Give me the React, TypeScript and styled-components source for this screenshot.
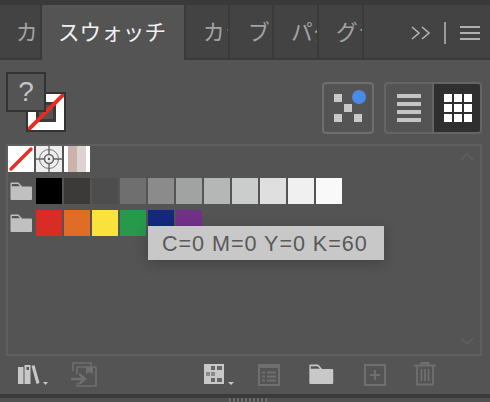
import React from "react";
import styled, { createGlobalStyle } from "styled-components";

const Global = createGlobalStyle`
  html, body { margin: 0; padding: 0; background: #545454; }
  * { box-sizing: border-box; }
`;

const Panel = styled.div`
  width: 490px;
  height: 402px;
  background: #545454;
  display: flex;
  flex-direction: column;
  overflow: hidden;
  font-family: "Noto Sans CJK JP", "Liberation Sans", sans-serif;
`;

const TopStrip = styled.div`
  height: 5px;
  flex: none;
  background: #3a3a3a;
`;

const TabBar = styled.div`
  height: 55px;
  flex: none;
  display: flex;
  background: #434343;
  border-bottom: 2px solid #3a3a3a;
`;

const Tab = styled.div<{ $w: number; $active?: boolean; $pad: number; $first?: boolean }>`
  width: ${(p) => p.$w}px;
  flex: none;
  height: ${(p) => (p.$active ? 55 : 53)}px;
  overflow: hidden;
  white-space: nowrap;
  padding-left: ${(p) => p.$pad}px;
  padding-top: 10px;
  line-height: 32px;
  font-size: 21.6px;
  color: ${(p) => (p.$active ? "#f0f0f0" : "#a4a4a4")};
  background: ${(p) => (p.$active ? "#545454" : "#434343")};
  border-right: ${(p) => (p.$active ? "none" : "2px solid #3a3a3a")};
  ${(p) => (p.$first ? "border-left: 2px solid #3a3a3a;" : "")}
`;

const TabRest = styled.div`
  flex: 1;
  display: flex;
  height: 53px;
  padding: 16px 0 0 47px;
`;

const Head = styled.div`
  height: 84px;
  flex: none;
  display: flex;
  padding: 0 8px 0 6px;
`;

const FillStroke = styled.div`
  position: relative;
  width: 60px;
  height: 60px;
  margin-top: 12px;
`;

const StrokeBox = styled.div`
  position: absolute;
  left: 20px;
  top: 20px;
  width: 40px;
  height: 40px;
  border: 2px solid #333;
  background: #fff;
`;

const StrokeInner = styled.div`
  position: absolute;
  left: 8px;
  top: 8px;
  width: 20px;
  height: 20px;
  background: #545454;
  border: 3px solid #3a3a3a;
`;

const StrokeSlash = styled.svg`
  position: absolute;
  left: 0;
  top: 0;
`;

const FillBox = styled.div`
  position: absolute;
  left: 0;
  top: 0;
  width: 40px;
  height: 40px;
  border: 2px solid #333;
  background: #545454;
  color: #c4c4c4;
  font: 28px/36px "Liberation Sans", sans-serif;
  text-align: center;
`;

const SpreadButton = styled.div`
  width: 52px;
  height: 52px;
  margin: 22px 0 0 256px;
  border: 2px solid #6e6e6e;
  border-radius: 4px;
`;

const Segmented = styled.div`
  width: 98px;
  height: 52px;
  margin: 22px 0 0 10px;
  display: flex;
  border: 2px solid #656565;
  border-radius: 4px;
  overflow: hidden;
`;

const Segment = styled.div<{ $on?: boolean }>`
  width: ${(p) => (p.$on ? 48 : 46)}px;
  display: flex;
  align-items: center;
  justify-content: center;
  padding-left: ${(p) => (p.$on ? 2 : 0)}px;
  background: ${(p) => (p.$on ? "#2f2f2f" : "transparent")};
  border-left: ${(p) => (p.$on ? "2px solid #656565" : "none")};
`;

const SwatchFrame = styled.div`
  position: relative;
  height: 212px;
  flex: none;
  margin: 0 8px 0 6px;
  border: 2px solid #5f5f5f;
  display: flex;
  flex-direction: column;
  gap: 6px;
`;

const Row = styled.div`
  display: flex;
  gap: 2px;
  height: 26px;
`;

const FolderSlot = styled.div`
  width: 26px;
  display: flex;
  align-items: center;
  padding-left: 2px;
`;

const Swatch = styled.div<{ $c: string }>`
  width: 26px;
  height: 26px;
  background: ${(p) => p.$c};
`;

const SpecialSwatch = styled.div`
  width: 26px;
  height: 26px;
  background: #fff;
  overflow: hidden;
`;

const Chevron = styled.svg<{ $bottom?: boolean }>`
  position: absolute;
  right: 6px;
  ${(p) => (p.$bottom ? "bottom: 9px;" : "top: 7px;")}
`;

const Tooltip = styled.div`
  position: absolute;
  left: 140px;
  top: 80px;
  width: 236px;
  height: 34px;
  background: #c8c8c8;
  color: #595959;
  font: 21.6px/36px "Liberation Sans", sans-serif;
  letter-spacing: 0.95px;
  padding-left: 14px;
  white-space: nowrap;
  box-shadow: 0 3px 14px rgba(0, 0, 0, 0.22);
`;

const Toolbar = styled.div`
  height: 38px;
  flex: none;
  display: flex;
  align-items: flex-start;
  padding: 6px 0 0 0;
`;

const Tool = styled.svg<{ $ml: number; $mt?: number }>`
  flex: none;
  margin-left: ${(p) => p.$ml}px;
  margin-top: ${(p) => p.$mt ?? 0}px;
  display: block;
`;

const BottomEdge = styled.div`
  height: 4px;
  flex: none;
  background: #3a3a3a;
`;

const BottomFoot = styled.div`
  height: 4px;
  flex: none;
  display: flex;
  justify-content: center;
  background: #505050;
`;

const Grip = styled.div`
  width: 38px;
  height: 4px;
  margin-left: 6px;
  background: repeating-linear-gradient(90deg, #6a6a6a 0 2px, #464646 2px 4px);
`;

const grays = ["#000000", "#3b3a38", "#4e4d4d", "#6f6f6f", "#8b8b8b", "#a1a3a2", "#b5b7b6", "#cbcdcc", "#dedfde", "#eff0ef", "#f8f9f8"];
const colors = ["#d82c25", "#e06c27", "#fbe13b", "#27994b", "#13287f", "#73308a"];

const Folder = ({ c = "#c0c0c0", w = 22, h = 18 }: { c?: string; w?: number; h?: number }) => (
  <svg width={w} height={h} viewBox="0 0 22 18" style={{ display: "block" }}>
    <path d="M0.5 1.5Q0.5 0.5 1.5 0.5H8.5L12 4.5H21Q22 4.5 22 5.5V17Q22 18 21 18H1.5Q0.5 18 0.5 17Z" fill={c} />
    <path d="M1.8 2H8L10 4.2H1.8Z" fill="#545454" />
  </svg>
);

export default function App() {
  return (
    <Panel>
      <Global />
      <TopStrip />
      <TabBar>
        <Tab $w={42} $pad={16}>カラー</Tab>
        <Tab $w={142} $active $pad={16}>スウォッチ</Tab>
        <Tab $w={46} $pad={17} $first>カラー</Tab>
        <Tab $w={44} $pad={18}>ブラシ</Tab>
        <Tab $w={45} $pad={17}>パターン</Tab>
        <Tab $w={45} $pad={17}>グラフ</Tab>
        <TabRest>
          <svg width="70" height="24" viewBox="0 0 70 24">
            <path d="M1 6L8 12L1 18M11 6L18 12L11 18" fill="none" stroke="#b4b4b4" strokeWidth="1.6" />
            <rect x="33" y="1" width="2" height="22" fill="#9a9a9a" />
            <path d="M49 6H69M49 12H69M49 18H69" stroke="#b0b0b0" strokeWidth="2" />
          </svg>
        </TabRest>
      </TabBar>

      <Head>
        <FillStroke>
          <StrokeBox>
            <StrokeInner />
            <StrokeSlash width="36" height="36" viewBox="0 0 36 36">
              <path d="M0 36L36 0" stroke="#ea2c20" strokeWidth="4" />
            </StrokeSlash>
          </StrokeBox>
          <FillBox>?</FillBox>
        </FillStroke>
        <SpreadButton>
          <svg width="48" height="48" viewBox="0 0 48 48">
            <rect x="10" y="10" width="8" height="8" fill="#c8c8c8" />
            <rect x="20" y="20" width="8" height="8" fill="#c8c8c8" />
            <rect x="10" y="30" width="8" height="8" fill="#c8c8c8" />
            <rect x="30" y="30" width="8" height="8" fill="#c8c8c8" />
            <circle cx="35" cy="13" r="7" fill="#4a8be8" />
          </svg>
        </SpreadButton>
        <Segmented>
          <Segment>
            <svg width="24" height="28" viewBox="0 0 24 28">
              <path d="M0 2H24M0 10H24M0 18H24M0 26H24" stroke="#c4c4c4" strokeWidth="4" />
            </svg>
          </Segment>
          <Segment $on>
            <svg width="28" height="28" viewBox="0 0 28 28" fill="#fff">
              {[0, 10, 20].map((y) =>
                [0, 10, 20].map((x) => <rect key={`${x}-${y}`} x={x} y={y} width="8" height="8" />)
              )}
            </svg>
          </Segment>
        </Segmented>
      </Head>

      <SwatchFrame>
        <Row>
          <SpecialSwatch>
            <svg width="26" height="26" viewBox="0 0 26 26">
              <path d="M3 23L23 3" stroke="#ea2c20" strokeWidth="3.4" strokeLinecap="round" />
            </svg>
          </SpecialSwatch>
          <SpecialSwatch>
            <svg width="26" height="26" viewBox="0 0 26 26">
              <rect width="26" height="26" fill="#eeeeee" />
              <circle cx="13" cy="13" r="9.5" fill="none" stroke="#777" strokeWidth="1" />
              <circle cx="13" cy="13" r="4.5" fill="none" stroke="#666" strokeWidth="1.6" />
              <circle cx="13" cy="13" r="1.2" fill="#555" />
              <path d="M13 0V8M13 18V26M0 13H8M18 13H26" stroke="#666" strokeWidth="1.4" />
            </svg>
          </SpecialSwatch>
          <SpecialSwatch>
            <svg width="26" height="26" viewBox="0 0 26 26">
              <rect x="4" width="9" height="26" fill="#cbb2aa" />
              <rect x="13" width="9" height="26" fill="#ddd3d0" />
            </svg>
          </SpecialSwatch>
        </Row>
        <Row>
          <FolderSlot><Folder /></FolderSlot>
          {grays.map((c) => <Swatch key={c} $c={c} />)}
        </Row>
        <Row>
          <FolderSlot><Folder /></FolderSlot>
          {colors.map((c) => <Swatch key={c} $c={c} />)}
        </Row>
        <Chevron width="14" height="8" viewBox="0 0 14 8">
          <path d="M1 7L7 1L13 7" fill="none" stroke="#606060" strokeWidth="1.6" />
        </Chevron>
        <Chevron $bottom width="14" height="8" viewBox="0 0 14 8">
          <path d="M1 1L7 7L13 1" fill="none" stroke="#606060" strokeWidth="1.6" />
        </Chevron>
        <Tooltip>C=0 M=0 Y=0 K=60</Tooltip>
      </SwatchFrame>

      <Toolbar>
        <Tool $ml={18} width="32" height="24" viewBox="0 0 32 24">
          <rect x="0" y="5" width="5.5" height="17" fill="#c8c8c8" />
          <rect x="6.5" y="3" width="6" height="19" fill="#c8c8c8" />
          <path d="M13.5 4L16.5 3L21.5 21L18.5 22Z" fill="#c8c8c8" />
          <path d="M25 20H30L27.5 23Z" fill="#c8c8c8" />
          <rect x="8.5" y="5" width="2.5" height="3" fill="#545454" />
        </Tool>
        <Tool $ml={20} width="28" height="26" viewBox="0 0 28 26" fill="none" stroke="#6f6f6f" strokeWidth="1.6">
          <path d="M3 9V1H21V5" />
          <path d="M7 12V5H26V24H7V21" />
          <path d="M1 17H13M9 12L15 17L9 22" strokeWidth="2.4" />
          <path d="M16 5H23V12L19.5 10L16 12Z" fill="#6f6f6f" stroke="none" />
        </Tool>
        <Tool $ml={106} width="30" height="24" viewBox="0 0 30 24">
          <rect x="0" y="2" width="20" height="20" fill="#c8c8c8" />
          <rect x="2" y="4" width="4" height="4" fill="#c8c8c8" />
          <rect x="7" y="4" width="4" height="4" fill="#666" />
          <rect x="13" y="4" width="5" height="4" fill="#666" />
          <rect x="2" y="10" width="4" height="4" fill="#8a8a8a" />
          <rect x="7" y="10" width="4" height="4" fill="#8a8a8a" />
          <rect x="7" y="16" width="4" height="4" fill="#666" />
          <rect x="13" y="16" width="5" height="4" fill="#666" />
          <path d="M24 20H30L27 23Z" fill="#c8c8c8" />
        </Tool>
        <Tool $ml={24} $mt={2} width="22" height="22" viewBox="0 0 22 22" fill="none" stroke="#6f6f6f">
          <rect x="1" y="1" width="20" height="20" strokeWidth="2" />
          <path d="M1 2.5H21" strokeWidth="3" />
          <path d="M4 8.5H7M9 8.5H18M4 12.5H7M9 12.5H18M4 16.5H7M9 16.5H18" strokeWidth="2" />
        </Tool>
        <Tool as="div" $ml={28} $mt={2}><Folder c="#c8c8c8" w={26} h={20} /></Tool>
        <Tool $ml={30} $mt={2} width="22" height="22" viewBox="0 0 22 22" fill="none" stroke="#6f6f6f" strokeWidth="2">
          <rect x="1" y="1" width="20" height="20" />
          <path d="M6 11H16M11 6V16" />
        </Tool>
        <Tool $ml={28} width="22" height="24" viewBox="0 0 22 24" fill="none" stroke="#6f6f6f" strokeWidth="1.8">
          <path d="M0 3.5H22M7.5 3V1H14.5V3M3 4V22.5H19V4" />
          <path d="M7.5 7V19M11 7V19M14.5 7V19" />
        </Tool>
      </Toolbar>
      <BottomEdge />
      <BottomFoot><Grip /></BottomFoot>
    </Panel>
  );
}
